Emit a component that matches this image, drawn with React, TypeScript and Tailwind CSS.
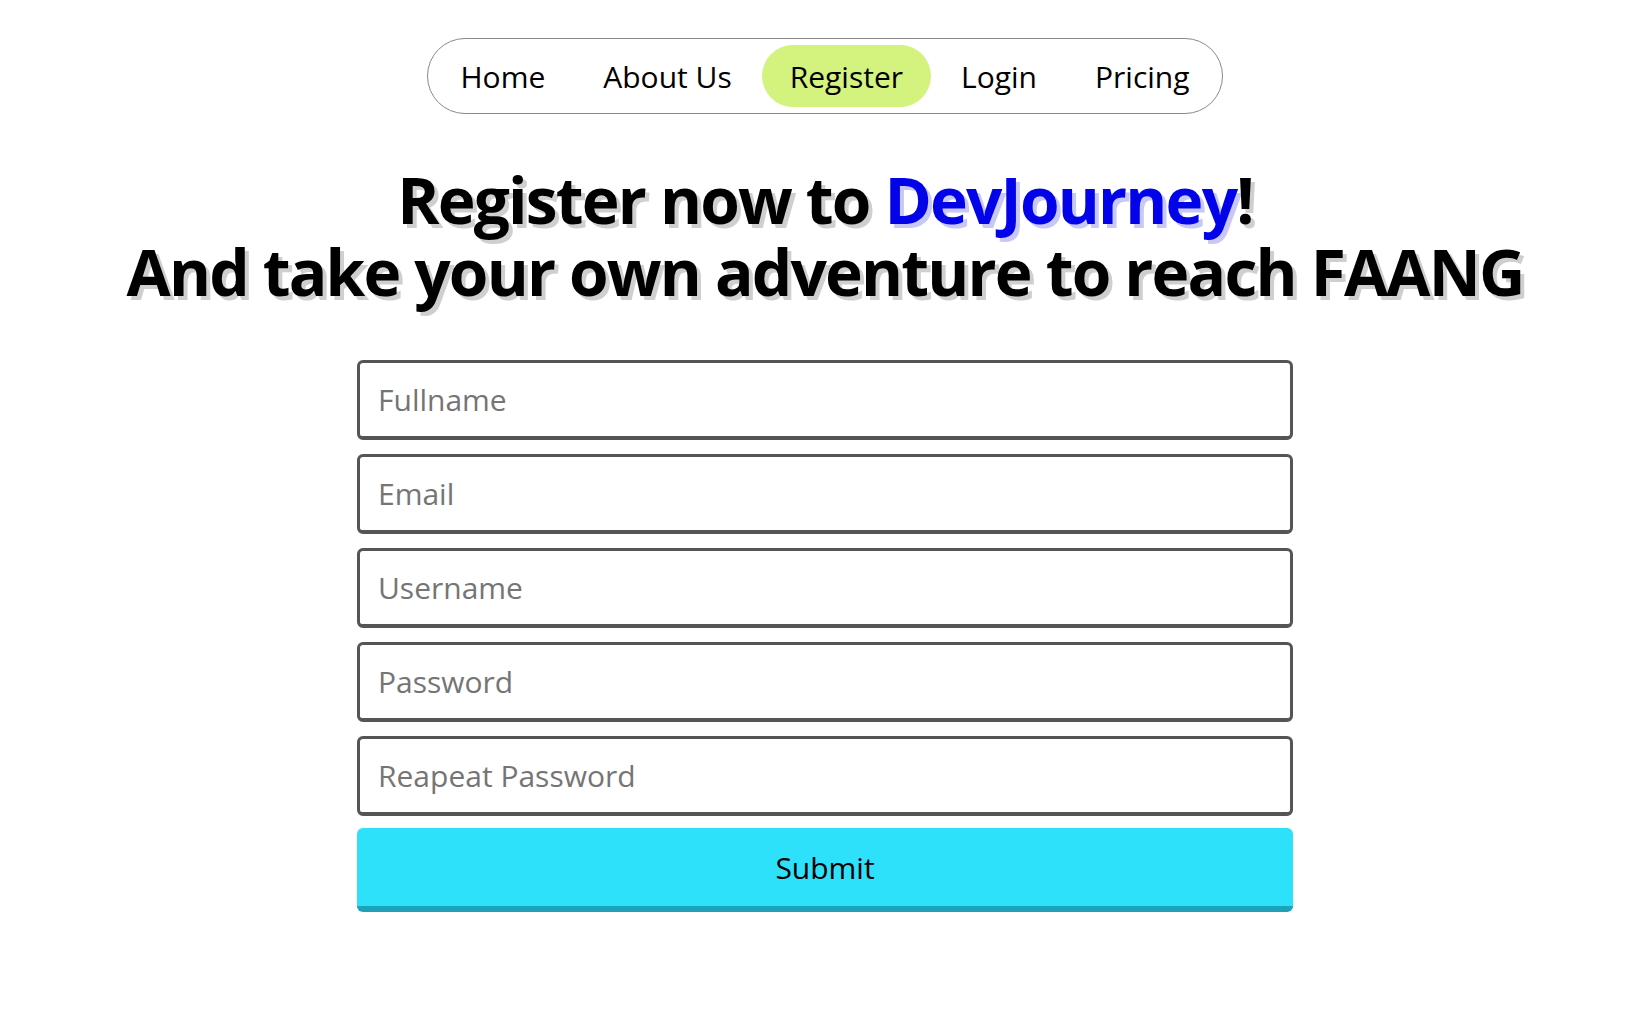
import React from "react";

const links = ["Home", "About Us", "Register", "Login", "Pricing"];

const fields = [
  { name: "fullname", type: "text", placeholder: "Fullname" },
  { name: "email", type: "email", placeholder: "Email" },
  { name: "username", type: "text", placeholder: "Username" },
  { name: "password", type: "password", placeholder: "Password" },
  { name: "repeat", type: "password", placeholder: "Reapeat Password" },
];

const App = () => {
  return (
    <main
      className="min-h-screen bg-white pl-[20px] pt-[38px] flex flex-col items-center text-black"
      style={{ fontFamily: '"Open Sans", "Noto Sans", sans-serif' }}
    >
      {/* Navbar */}
      <nav className="flex items-center gap-[2px] rounded-full border-[1.5px] border-[#8a8a8a] px-[4px] py-[6px]">
        {links.map((link) => (
          <a
            key={link}
            href="#"
            className={
              "flex h-[62px] items-center rounded-full px-[28px] text-[30px] " +
              (link === "Register" ? "bg-[#d3f27e]" : "")
            }
          >
            {link}
          </a>
        ))}
      </nav>

      {/* Heading */}
      <h1 className="mt-[50px] text-center text-[64px] font-bold leading-[1.12] tracking-[-1.8px] [text-shadow:4px_4px_0_#cfcfcf]">
        Register now to{" "}
        <span className="text-[#0303ea] [text-shadow:4px_4px_0_#c8c8f6]">DevJourney</span>!
        <br />
        And take your own adventure to reach FAANG
      </h1>

      {/* Form */}
      <form className="mt-[53px] flex w-[936px] flex-col gap-[14px]" onSubmit={(e) => e.preventDefault()}>
        {fields.map((f) => (
          <input
            key={f.name}
            name={f.name}
            type={f.type}
            placeholder={f.placeholder}
            className="h-[80px] w-full rounded-[6px] border-[3px] border-b-[4px] border-[#555] bg-white px-[18px] text-[30px] outline-none placeholder:text-[#757575]"
          />
        ))}
        <button
          type="submit"
          className="-mt-[2px] h-[84px] w-full rounded-[6px] border-b-[6px] border-[#1ca3b9] bg-[#2ee1fa] text-[30px]"
        >
          Submit
        </button>
      </form>
    </main>
  );
};

export default App;
